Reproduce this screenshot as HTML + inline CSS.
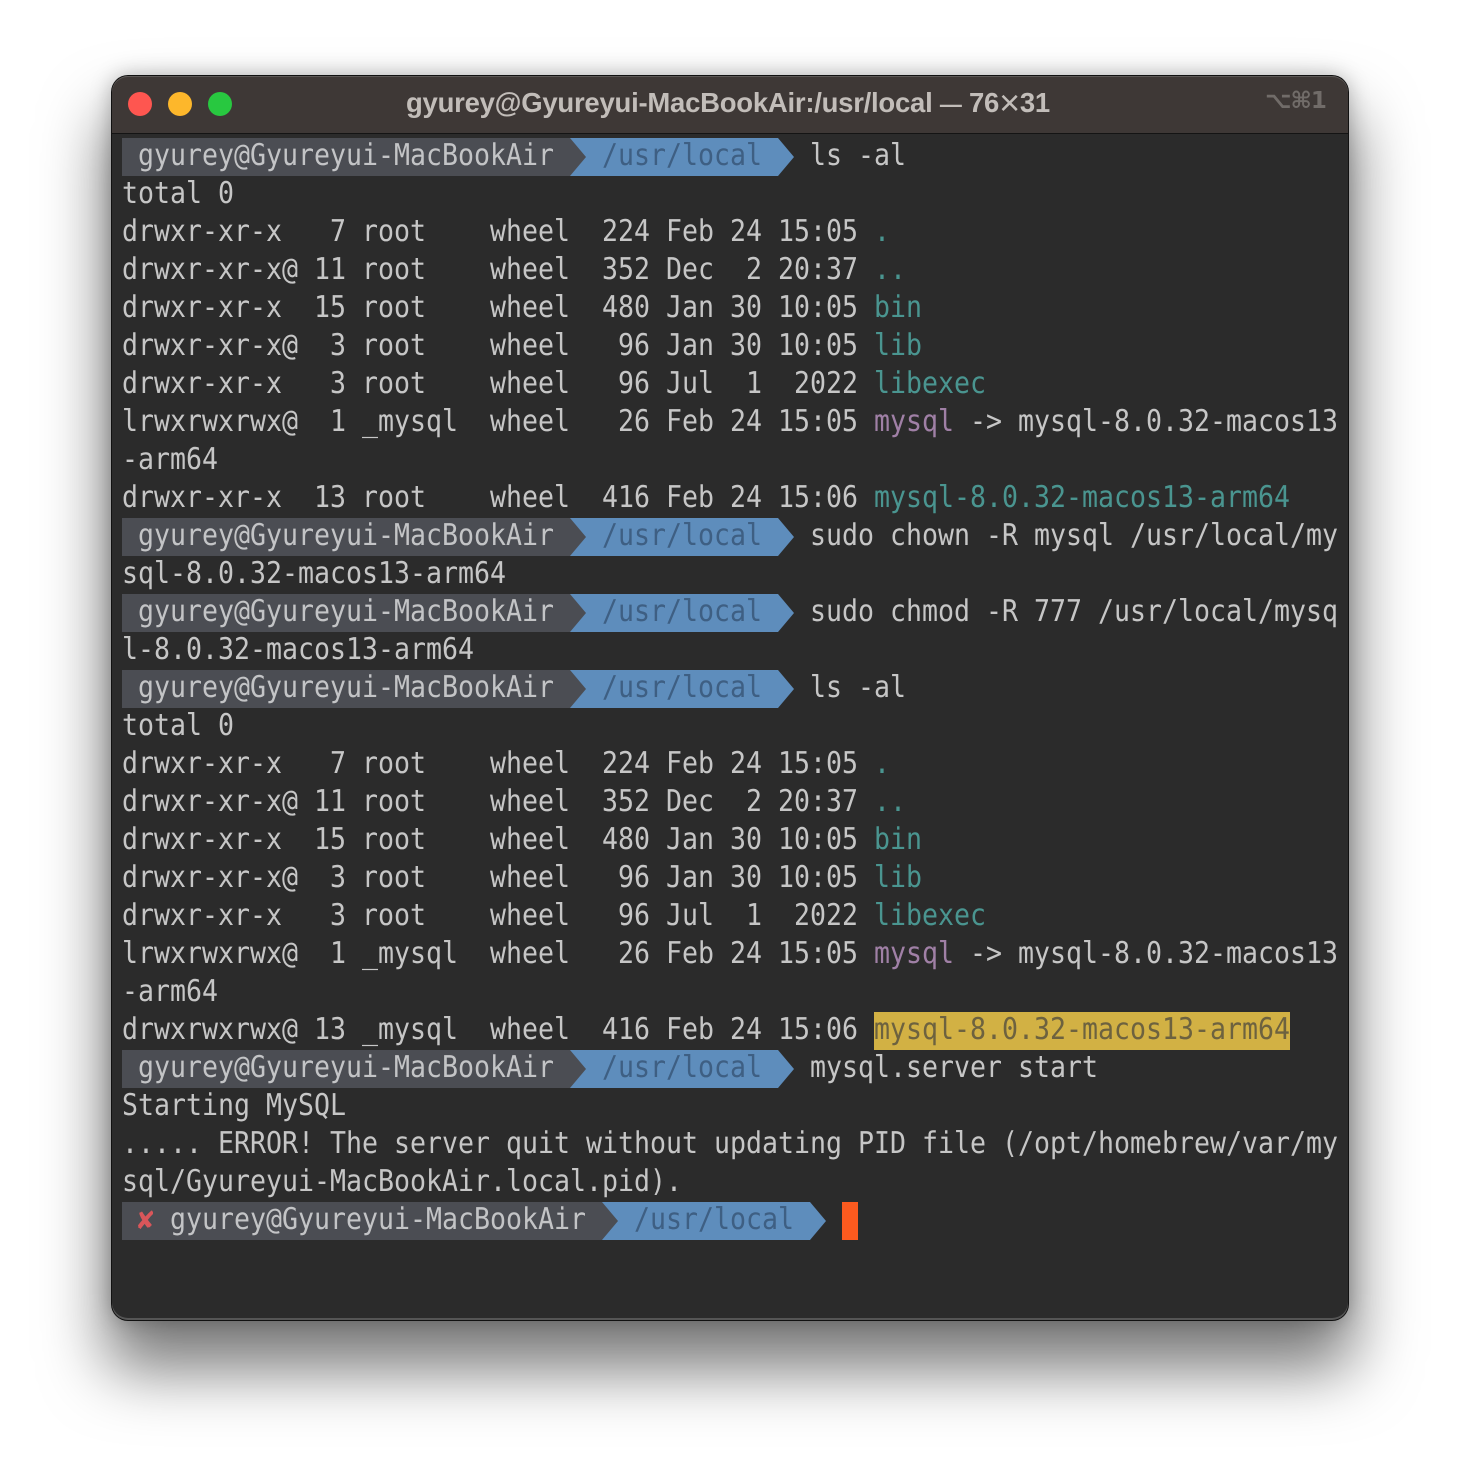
<!DOCTYPE html>
<html lang="en"><head><meta charset="utf-8"><title>Terminal</title>
<style>
html,body{margin:0;padding:0;background:#fff;width:1460px;height:1468px;overflow:hidden}
.win{position:absolute;left:112px;top:76px;width:1236px;height:1244px;border-radius:16px;background:#2b2b2b;box-shadow:inset 0 -2px 0 #555,0 0 0 1px #111,0 44px 64px 6px rgba(0,0,0,.52),0 0 22px rgba(0,0,0,.28)}
.bar{position:absolute;left:0;top:0;width:1236px;height:57px;background:#3e3836;border-radius:16px 16px 0 0;box-shadow:inset 0 1px 0 #5c5856;border-bottom:1px solid #141414}
.dot{position:absolute;top:16px;width:24px;height:24px;border-radius:50%}
.ttl{position:absolute;left:294px;top:12px;font:bold 27.5px/30px "Liberation Sans",sans-serif;color:#c2bdb9;white-space:pre;letter-spacing:-.25px}
.ttl .d{font-size:22px}
.ttl .m{font-size:36px;font-weight:normal;line-height:0;position:relative;top:3px}
.key{position:absolute;left:1153px;top:9px;font:bold 23px/32px "DejaVu Sans",sans-serif;color:#716c69;white-space:pre;letter-spacing:-1px}
svg{position:absolute;left:0;top:0}
.t{position:absolute;left:122px;top:137px;width:1600px;transform:scaleX(.88586);transform-origin:0 0;font:30px/38px "DejaVu Sans Mono",monospace;color:#c6c6c6;font-variant-ligatures:none;text-rendering:geometricPrecision}
.t div{height:38px;white-space:pre}
.n{color:#c3c4c6}.p{color:#3e5f83}.c{color:#4a9590}.m2{color:#a080a6}.y{color:#6d623f}
</style></head><body>
<div class="win">
<div class="bar">
<div class="dot" style="left:16px;background:#fe5650"></div>
<div class="dot" style="left:56px;background:#fdb72b"></div>
<div class="dot" style="left:96px;background:#28c840"></div>
<div class="ttl">gyurey@Gyureyui-MacBookAir:/usr/local <span class="d">—</span> 76<span class="m">×</span>31</div>
<div class="key">⌥⌘1</div>
</div>
</div>
<svg width="1460" height="1468" xmlns="http://www.w3.org/2000/svg">
<g transform="translate(0,138)"><polygon points="570,0 778,0 794,19 778,38 570,38" fill="#5e8dbc"/><polygon points="122,0 570,0 586,19 570,38 122,38" fill="#4b4d53"/></g>
<g transform="translate(0,518)"><polygon points="570,0 778,0 794,19 778,38 570,38" fill="#5e8dbc"/><polygon points="122,0 570,0 586,19 570,38 122,38" fill="#4b4d53"/></g>
<g transform="translate(0,594)"><polygon points="570,0 778,0 794,19 778,38 570,38" fill="#5e8dbc"/><polygon points="122,0 570,0 586,19 570,38 122,38" fill="#4b4d53"/></g>
<g transform="translate(0,670)"><polygon points="570,0 778,0 794,19 778,38 570,38" fill="#5e8dbc"/><polygon points="122,0 570,0 586,19 570,38 122,38" fill="#4b4d53"/></g>
<g transform="translate(0,1050)"><polygon points="570,0 778,0 794,19 778,38 570,38" fill="#5e8dbc"/><polygon points="122,0 570,0 586,19 570,38 122,38" fill="#4b4d53"/></g>
<g transform="translate(0,1202)"><polygon points="602,0 810,0 826,19 810,38 602,38" fill="#5e8dbc"/><polygon points="122,0 602,0 618,19 602,38 122,38" fill="#4b4d53"/></g>
<rect x="874" y="1012" width="416" height="38" fill="#d2b144"/>
<rect x="842" y="1202" width="16" height="38" fill="#fb5a1f"/>
</svg>
<div class="t"><div> <span class="n">gyurey@Gyureyui-MacBookAir</span>   <span class="p">/usr/local</span>   ls -al</div>
<div>total 0</div>
<div>drwxr-xr-x   7 root    wheel  224 Feb 24 15:05 <span class="c">.</span></div>
<div>drwxr-xr-x@ 11 root    wheel  352 Dec  2 20:37 <span class="c">..</span></div>
<div>drwxr-xr-x  15 root    wheel  480 Jan 30 10:05 <span class="c">bin</span></div>
<div>drwxr-xr-x@  3 root    wheel   96 Jan 30 10:05 <span class="c">lib</span></div>
<div>drwxr-xr-x   3 root    wheel   96 Jul  1  2022 <span class="c">libexec</span></div>
<div>lrwxrwxrwx@  1 _mysql  wheel   26 Feb 24 15:05 <span class="m2">mysql</span> -&gt; mysql-8.0.32-macos13</div>
<div>-arm64</div>
<div>drwxr-xr-x  13 root    wheel  416 Feb 24 15:06 <span class="c">mysql-8.0.32-macos13-arm64</span></div>
<div> <span class="n">gyurey@Gyureyui-MacBookAir</span>   <span class="p">/usr/local</span>   sudo chown -R mysql /usr/local/my</div>
<div>sql-8.0.32-macos13-arm64</div>
<div> <span class="n">gyurey@Gyureyui-MacBookAir</span>   <span class="p">/usr/local</span>   sudo chmod -R 777 /usr/local/mysq</div>
<div>l-8.0.32-macos13-arm64</div>
<div> <span class="n">gyurey@Gyureyui-MacBookAir</span>   <span class="p">/usr/local</span>   ls -al</div>
<div>total 0</div>
<div>drwxr-xr-x   7 root    wheel  224 Feb 24 15:05 <span class="c">.</span></div>
<div>drwxr-xr-x@ 11 root    wheel  352 Dec  2 20:37 <span class="c">..</span></div>
<div>drwxr-xr-x  15 root    wheel  480 Jan 30 10:05 <span class="c">bin</span></div>
<div>drwxr-xr-x@  3 root    wheel   96 Jan 30 10:05 <span class="c">lib</span></div>
<div>drwxr-xr-x   3 root    wheel   96 Jul  1  2022 <span class="c">libexec</span></div>
<div>lrwxrwxrwx@  1 _mysql  wheel   26 Feb 24 15:05 <span class="m2">mysql</span> -&gt; mysql-8.0.32-macos13</div>
<div>-arm64</div>
<div>drwxrwxrwx@ 13 _mysql  wheel  416 Feb 24 15:06 <span class="y">mysql-8.0.32-macos13-arm64</span></div>
<div> <span class="n">gyurey@Gyureyui-MacBookAir</span>   <span class="p">/usr/local</span>   mysql.server start</div>
<div>Starting MySQL</div>
<div>..... ERROR! The server quit without updating PID file (/opt/homebrew/var/my</div>
<div>sql/Gyureyui-MacBookAir.local.pid).</div>
<div>   <span class="n">gyurey@Gyureyui-MacBookAir</span>   <span class="p">/usr/local</span></div></div>
<div style="position:absolute;left:135px;top:1204px;width:18px;height:34px;overflow:hidden;font:bold 25px/34px 'DejaVu Sans',sans-serif;color:#d9565a;text-align:center">✘</div>
</body></html>
